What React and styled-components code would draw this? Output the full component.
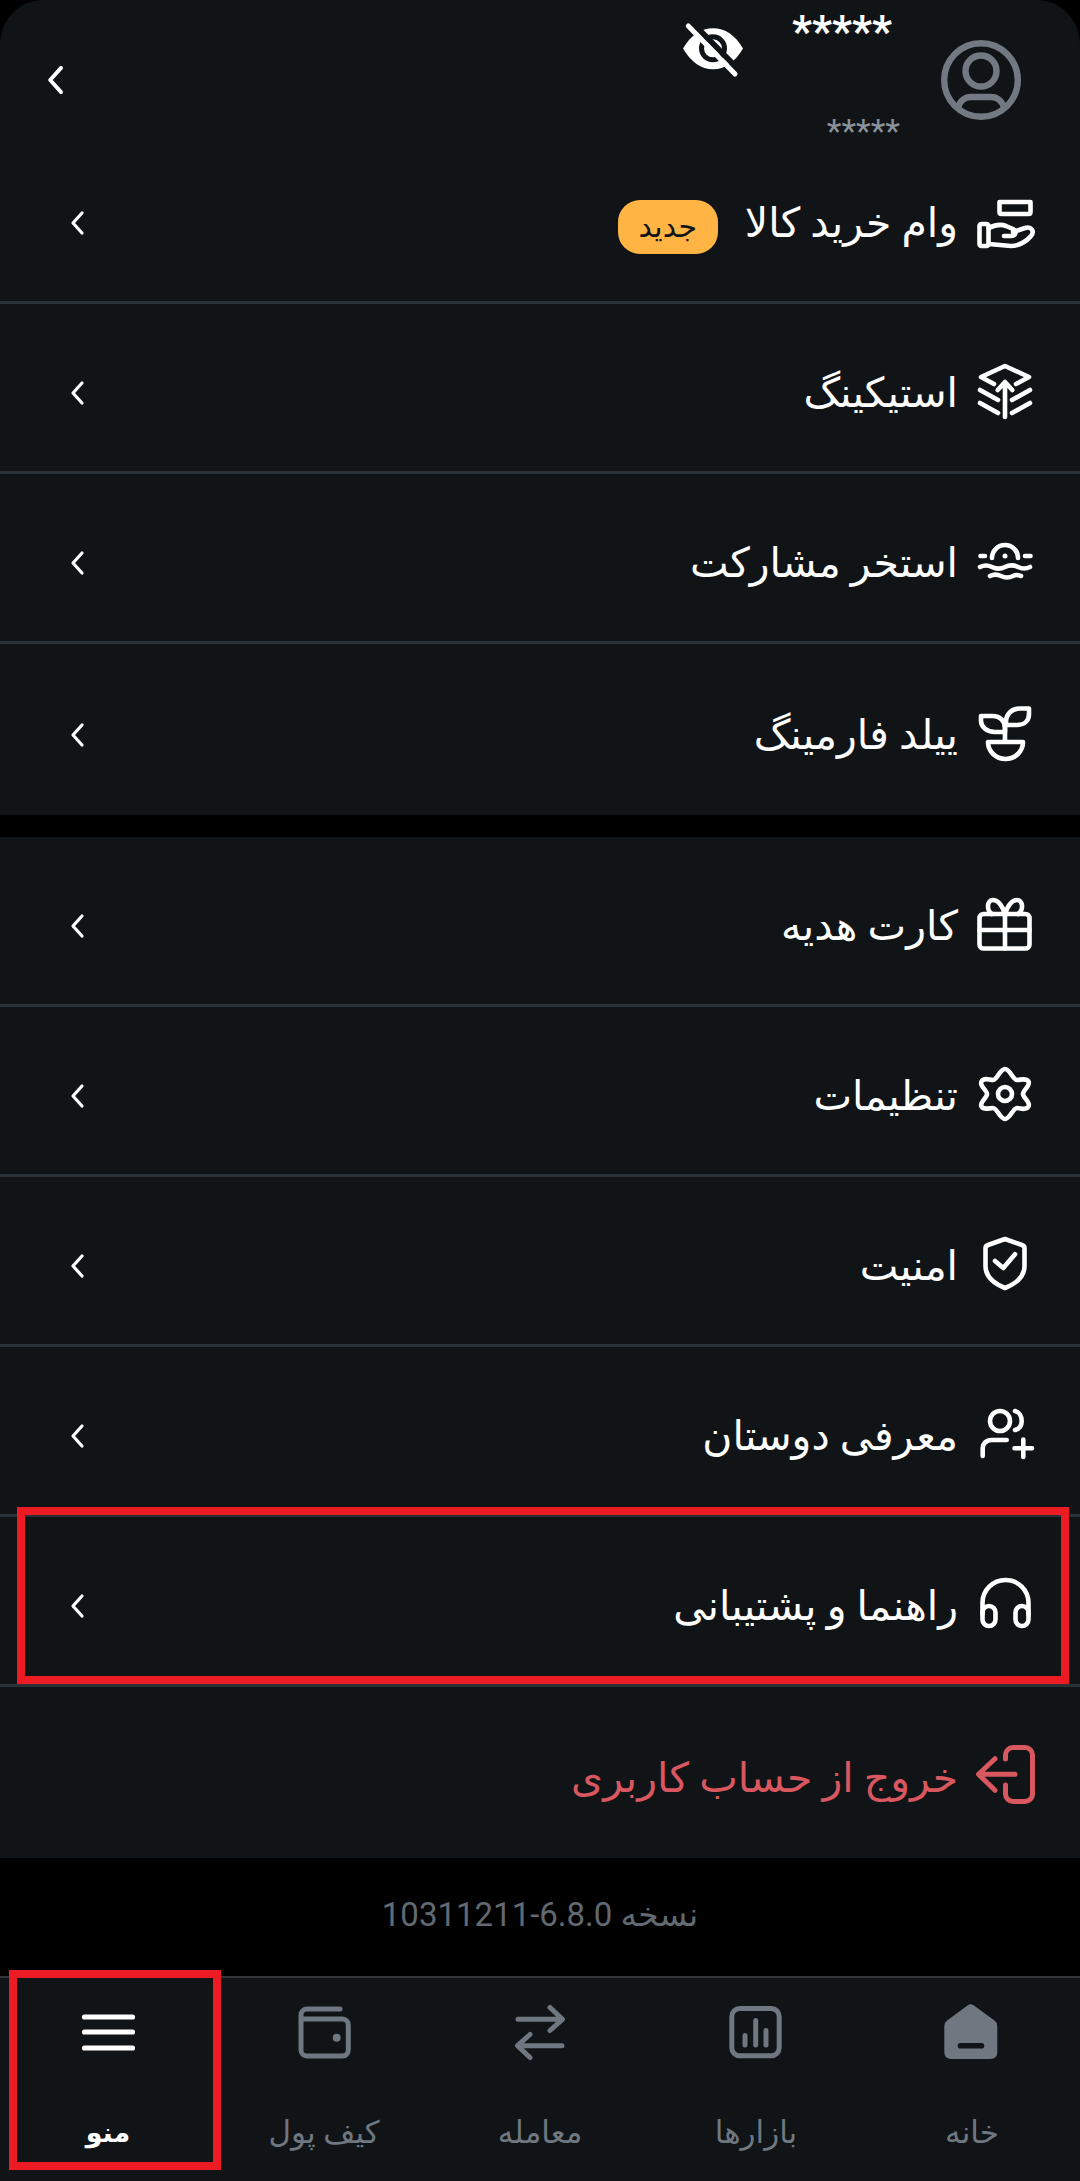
import * as React from "react";
import styled, { createGlobalStyle } from "styled-components";

const GlobalStyle = createGlobalStyle`
  html, body {
    margin: 0;
    padding: 0;
    background: #000;
  }
  * {
    box-sizing: border-box;
  }
  body {
    font-family: Roboto, "DejaVu Sans", sans-serif;
  }
  svg {
    display: block;
    overflow: visible;
  }
`;

const Page = styled.div`
  position: relative;
  width: 1080px;
  height: 2181px;
  background: #000;
  direction: rtl;
  display: flex;
  flex-direction: column;
  overflow: hidden;
`;

const Header = styled.header`
  height: 134px;
  background: #111416;
  border-radius: 44px 44px 0 0;
  display: flex;
  align-items: flex-start;
  padding: 40px 59px 0 44px;
`;

const Avatar = styled.div`
  width: 80px;
  height: 80px;
  color: #727982;
  margin-left: 41px;
  flex-shrink: 0;
`;

const Names = styled.div`
  display: flex;
  flex-direction: column;
  width: 107px;
  margin-top: -34px;
`;

const MainStars = styled.div`
  color: #fff;
  font-size: 44px;
  font-weight: 700;
  line-height: 52px;
  margin-right: 8px;
`;

const SubStars = styled.div`
  color: #8a929b;
  font-size: 34px;
  line-height: 40px;
  margin-top: 53px;
`;

const EyeButton = styled.div`
  width: 60px;
  height: 60px;
  color: #fff;
  margin-right: 50px;
  margin-top: -20px;
`;

const BackButton = styled.div`
  margin-right: auto;
  margin-top: 23px;
  width: 22px;
  height: 34px;
  color: #fff;
`;

const Section = styled.section`
  background: #111416;
  display: flex;
  flex-direction: column;
  margin-bottom: ${(p) => p.$gap || 0}px;
`;

const Row = styled.div`
  height: ${(p) => p.$height || 170}px;
  display: flex;
  align-items: center;
  padding: 10px 45px 0 68px;
  border-bottom: ${(p) => (p.$last ? "none" : "3px solid #2b3237")};
  color: ${(p) => (p.$danger ? "#d9575f" : "#fff")};
`;

const RowIcon = styled.div`
  width: 60px;
  height: 60px;
  flex-shrink: 0;
  margin-left: 17px;
`;

const RowLabel = styled.span`
  font-size: 41px;
  line-height: 50px;
  white-space: nowrap;
`;

const Badge = styled.span`
  width: 100px;
  height: 54px;
  border-radius: 22px;
  background: #ffb444;
  color: #111416;
  font-size: 30px;
  display: flex;
  align-items: center;
  justify-content: center;
  margin-right: 27px;
  margin-top: 8px;
`;

const Chevron = styled.div`
  margin-right: auto;
  width: 18px;
  height: 28px;
  color: #fff;
`;

const Version = styled.div`
  height: 118px;
  padding-bottom: 6px;
  display: flex;
  align-items: center;
  justify-content: center;
  color: #626971;
  font-size: 33px;
`;

const BottomNav = styled.nav`
  flex: 1;
  background: #111416;
  border-top: 2px solid #33373b;
  display: grid;
  grid-template-columns: repeat(5, 1fr);
`;

const NavItem = styled.div`
  display: flex;
  flex-direction: column;
  align-items: center;
  padding-top: 26px;
  color: ${(p) => (p.$active ? "#fff" : "#6f7780")};
`;

const NavIcon = styled.div`
  width: 60px;
  height: 60px;
`;

const NavLabel = styled.span`
  font-size: ${(p) => (p.$active ? 27 : 31)}px;
  line-height: 36px;
  margin-top: 51px;
  font-weight: ${(p) => (p.$active ? 700 : 400)};
`;

const Marker = styled.div`
  position: absolute;
  left: ${(p) => p.$left}px;
  top: ${(p) => p.$top}px;
  width: ${(p) => p.$width}px;
  height: ${(p) => p.$height}px;
  border: 8px solid #ed1c24;
  pointer-events: none;
`;

const Stroke = ({ children, width = 4.6, box = 60 }) => (
  <svg width="100%" height="100%" viewBox={`0 0 ${box} ${box}`} fill="none" stroke="currentColor" strokeWidth={width} strokeLinecap="round" strokeLinejoin="round">
    {children}
  </svg>
);

const LoanIcon = () => (
  <Stroke>
    <path d="M24.500 9H55.500V19Q55.500 21 53.500 21H26.500Q24.500 21 24.500 19Z" />
    <rect x="4.500" y="31" width="9" height="22" rx="2" />
    <path d="M14 35C20 32 26 31 31 33L38 36C42 38 41 43 36 43H29" />
    <path d="M38 39L50 35C56 33 60 38 56 43C52 48 44 53 36 53L14 51" />
  </Stroke>
);

const StakeIcon = () => (
  <Stroke>
    <path d="M19 21L6 14 30 3 54 14 41 21" />
    <path d="M5 27L23 37M55 27L37 37" />
    <path d="M5 40L23 50M55 40L37 50" />
    <path d="M30 54V20M22.700 27L30 19 37.300 27" />
  </Stroke>
);

const PoolIcon = () => (
  <Stroke>
    <path d="M17 25A13 13 0 0 1 43 25" />
    <path d="M5.500 23H10M50 23H55.500" />
    <path d="M5 34C9 32 13 32 17 34S26 36 30 34 39 32 43 34 51 36 55 34" />
    <path d="M15 43C19 41 22 41 26 43S34 45 38 43 43 42 46 43" />
    <circle cx="30" cy="23" r="2.500" fill="currentColor" stroke="none" />
  </Stroke>
);

const SproutIcon = () => (
  <Stroke>
    <path d="M31 20V17C31 9 37 3.500 45 3.500H54V9C54 16 49 20 42 20H31" />
    <path d="M6 11H18C25 11 30 16 30 23V27H20C12 27 6 22 6 16Z" />
    <path d="M30 20V36" />
    <path d="M13 37H48A17.500 17 0 0 1 13 37Z" />
  </Stroke>
);

const GiftIcon = () => (
  <Stroke>
    <rect x="4.500" y="18" width="50" height="34.500" rx="4" />
    <path d="M4.500 34H54.500M30 18V52.500" />
    <path d="M30 18C27 9 23 4 18 4 12 4 11 14 17 18" />
    <path d="M30 18C33 9 37 4 42 4 48 4 49 14 43 18" />
  </Stroke>
);

const GearIcon = () => (
  <Stroke>
    <path d="M18 14C22 14 25 3 30 3S38 14 42 14C46 14 51 11.500 53.500 15.500S48 24 48 28C48 32 56 36 53.500 40.500S46 42 42 42C38 42 35 53 30 53S22 42 18 42C14 42 9 44.500 6.500 40.500S12 32 12 28C12 24 4 20 6.500 15.500S14 14 18 14Z" />
    <circle cx="30" cy="28" r="7" />
  </Stroke>
);

const ShieldIcon = () => (
  <Stroke>
    <path d="M30 3L47 9Q49.500 10 49.500 12V30C49.500 41 40 48 30 52 20 48 10.500 41 10.500 30V12Q10.500 10 13 9Z" />
    <path d="M20 25L28.300 32 40 18.300" />
  </Stroke>
);

const InviteIcon = () => (
  <Stroke>
    <circle cx="25" cy="15" r="10" />
    <path d="M40 5C44 6 46.700 10 46.700 15S44 23 40 24" />
    <path d="M7.700 50V42C7.700 38 11 34 16.700 34H31.700" />
    <path d="M48.300 33.500V51M39.500 42.300H57" />
  </Stroke>
);

const HeadsetIcon = () => (
  <Stroke>
    <path d="M7.500 38V27A23 23 0 0 1 53.500 27V38" />
    <rect x="7.500" y="30" width="13" height="20" rx="6.500" />
    <rect x="40.500" y="30" width="13" height="20" rx="6.500" />
  </Stroke>
);

const LogoutIcon = () => (
  <Stroke width={5}>
    <path d="M30.500 11V7A7.500 7.500 0 0 1 38 -0.500H50A7.500 7.500 0 0 1 57.500 7V46A7.500 7.500 0 0 1 50 53.500H38A7.500 7.500 0 0 1 30.500 46V37" />
    <path d="M40 26.300H4M20 10.700L3.500 26.300 20 42.300" />
  </Stroke>
);

const HomeIcon = () => (
  <svg width="100%" height="100%" viewBox="0 0 60 60">
    <path
      fill="currentColor"
      fillRule="evenodd"
      d="M25.800 1.200Q28.700 -0.800 31.600 1.200L52.500 16.500Q55.300 18.500 55.300 22V48Q55.300 55 48.300 55H9.300Q2.300 55 2.300 48V22Q2.300 18.500 5.100 16.500ZM18.500 39A2.800 2.800 0 0 0 18.500 44.600H39.500A2.800 2.800 0 0 0 39.500 39Z"
    />
  </svg>
);

const MarketIcon = () => (
  <Stroke width={5}>
    <rect x="5.800" y="4.500" width="47.400" height="47.300" rx="8" />
    <path d="M19 31.500V41M29.700 16.500V41M40 26.500V41" />
  </Stroke>
);

const SwapIcon = () => (
  <Stroke width={5}>
    <path d="M8 15.300H52M40 3.500L52.500 15.300 40 26.500" />
    <path d="M52 41.700H8M20 30.500L7.500 41.700 20 53.500" />
  </Stroke>
);

const WalletIcon = () => (
  <Stroke width={5}>
    <path d="M46 5H13A6 6 0 0 0 7 11V46A6 6 0 0 0 13 52H48.500A6 6 0 0 0 54.300 46V21A6 6 0 0 0 48.500 15H7" />
    <circle cx="42.700" cy="33.700" r="4" fill="currentColor" stroke="none" />
  </Stroke>
);

const MenuIcon = () => (
  <Stroke width={5.200}>
    <path d="M6.500 13H54.500M6.500 28H54.500M6.500 44H54.500" />
  </Stroke>
);

const EyeOffIcon = () => (
  <svg width="100%" height="100%" viewBox="0 0 60 60">
    <path fill="currentColor" d="M0 28.500C8 15 18 8.300 30 8.300S52 15 60 28.500C52 42 42 49.300 30 49.300S8 42 0 28.500Z" />
    <circle cx="30" cy="28.300" r="14" fill="#111416" />
    <circle cx="30" cy="28.300" r="9" fill="currentColor" />
    <path d="M9.500 3L56 50" stroke="#111416" strokeWidth="6" />
    <path d="M5.300 6L52 54" stroke="currentColor" strokeWidth="5" strokeLinecap="round" />
  </svg>
);

const AvatarIcon = () => (
  <Stroke box={80} width={6.400}>
    <circle cx="40" cy="40" r="36.800" />
    <circle cx="40" cy="31" r="15.500" />
    <path d="M17.300 67C19 61 24 57 30 57H50C56 57 61 61 62.700 67" />
  </Stroke>
);

const ChevronIcon = () => (
  <svg width="100%" height="100%" viewBox="0 0 18 28" fill="none" stroke="currentColor" strokeWidth="3.200" strokeLinecap="round" strokeLinejoin="round">
    <path d="M14 4L5 14l9 10" />
  </svg>
);

const firstGroup = [
  { label: "وام خرید کالا", icon: <LoanIcon />, badge: "جدید" },
  { label: "استیکینگ", icon: <StakeIcon /> },
  { label: "استخر مشارکت", icon: <PoolIcon /> },
  { label: "ییلد فارمینگ", icon: <SproutIcon /> },
];

const secondGroup = [
  { label: "کارت هدیه", icon: <GiftIcon /> },
  { label: "تنظیمات", icon: <GearIcon /> },
  { label: "امنیت", icon: <ShieldIcon /> },
  { label: "معرفی دوستان", icon: <InviteIcon /> },
  { label: "راهنما و پشتیبانی", icon: <HeadsetIcon /> },
];

const navItems = [
  { label: "خانه", icon: <HomeIcon /> },
  { label: "بازارها", icon: <MarketIcon /> },
  { label: "معامله", icon: <SwapIcon /> },
  { label: "کیف پول", icon: <WalletIcon /> },
  { label: "منو", icon: <MenuIcon />, active: true },
];

const MenuRow = ({ item, last, height }) => (
  <Row $last={last} $height={height}>
    <RowIcon>{item.icon}</RowIcon>
    <RowLabel>{item.label}</RowLabel>
    {item.badge && <Badge>{item.badge}</Badge>}
    <Chevron>
      <ChevronIcon />
    </Chevron>
  </Row>
);

const App = () => (
  <Page>
    <GlobalStyle />
    <Header>
      <Avatar>
        <AvatarIcon />
      </Avatar>
      <Names>
        <MainStars>*****</MainStars>
        <SubStars>*****</SubStars>
      </Names>
      <EyeButton>
        <EyeOffIcon />
      </EyeButton>
      <BackButton>
        <ChevronIcon />
      </BackButton>
    </Header>
    <Section $gap={22}>
      {firstGroup.map((item, index) => (
        <MenuRow key={item.label} item={item} last={index === firstGroup.length - 1} height={index === 3 ? 171 : 170} />
      ))}
    </Section>
    <Section>
      {secondGroup.map((item) => (
        <MenuRow key={item.label} item={item} />
      ))}
      <Row $danger $last $height={171}>
        <RowIcon>
          <LogoutIcon />
        </RowIcon>
        <RowLabel>خروج از حساب کاربری</RowLabel>
      </Row>
    </Section>
    <Version>
      <span>نسخه 6.8.0-10311211</span>
    </Version>
    <BottomNav>
      {navItems.map((item) => (
        <NavItem key={item.label} $active={item.active}>
          <NavIcon>{item.icon}</NavIcon>
          <NavLabel $active={item.active}>{item.label}</NavLabel>
        </NavItem>
      ))}
    </BottomNav>
    <Marker $left={17} $top={1507} $width={1052} $height={177} />
    <Marker $left={9} $top={1970} $width={212} $height={200} />
  </Page>
);

export default App;
